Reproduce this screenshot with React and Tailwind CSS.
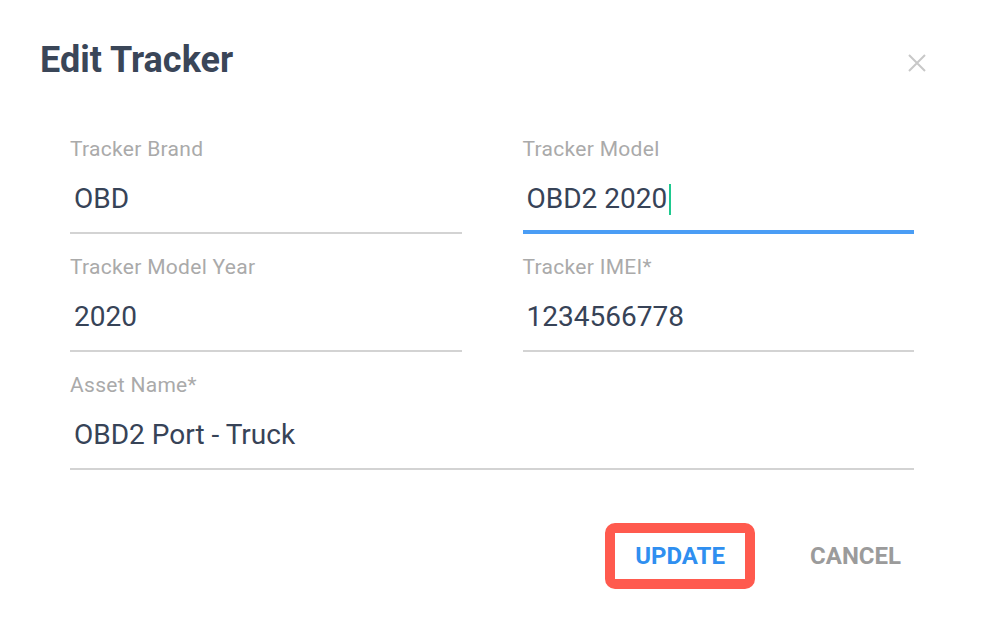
import React from "react";

function Field({ label, value, focused, className = "" }) {
  return (
    <div className={"flex flex-col " + className}>
      <div className="h-[24px] text-[21px] leading-[24px] tracking-[0.3px] text-[#aaaaaa]">{label}</div>
      <div
        className={
          "mt-[22px] pl-[4px] text-[28px] leading-[32px] text-[#374357] flex items-center " +
          (focused ? "pb-[15px] border-b-4 border-[#4a9df5]" : "pb-[17px] border-b-2 border-[#d3d3d3]")
        }
      >
        <span>{value}</span>
        {focused && <span className="ml-[2px] inline-block w-[2px] h-[31px] bg-[#1ec98f]" />}
      </div>
    </div>
  );
}

export default function App() {
  return (
    <div
      className="w-[982px] h-[632px] bg-white overflow-hidden"
      style={{ fontFamily: "Roboto, 'Liberation Sans', sans-serif" }}
    >
      <div className="flex items-start justify-between pt-[42px] pl-[40px] pr-[56px]">
        <h1 className="text-[36px] leading-[36px] font-bold text-[#3a4658]">Edit Tracker</h1>
        <button className="mt-[12px] w-[18px] h-[18px] text-[#c8c8c8]" aria-label="close">
          <svg viewBox="0 0 18 18" width="18" height="18" fill="none" stroke="currentColor" strokeWidth="2">
            <path d="M1 1L17 17M17 1L1 17" />
          </svg>
        </button>
      </div>

      <div className="mt-[59px] ml-[70px] w-[844px] flex flex-col gap-[21px]">
        <div className="grid grid-cols-2 gap-x-[61px]">
          <Field label="Tracker Brand" value="OBD" />
          <Field label="Tracker Model" value="OBD2 2020" focused />
        </div>
        <div className="grid grid-cols-2 gap-x-[61px]">
          <Field label="Tracker Model Year" value="2020" />
          <Field label="Tracker IMEI*" value="1234566778" />
        </div>
        <Field label="Asset Name*" value="OBD2 Port - Truck" />
      </div>

      <div className="mt-[53px] flex justify-end items-center pr-[81px]">
        <button className="w-[150px] h-[66px] border-[10px] border-[#ff5a4e] rounded-[10px] flex items-center justify-center text-[24px] font-bold text-[#2f8ff0]">
          UPDATE
        </button>
        <button className="ml-[55px] text-[24px] font-bold text-[#9b9b9b]">CANCEL</button>
      </div>
    </div>
  );
}
